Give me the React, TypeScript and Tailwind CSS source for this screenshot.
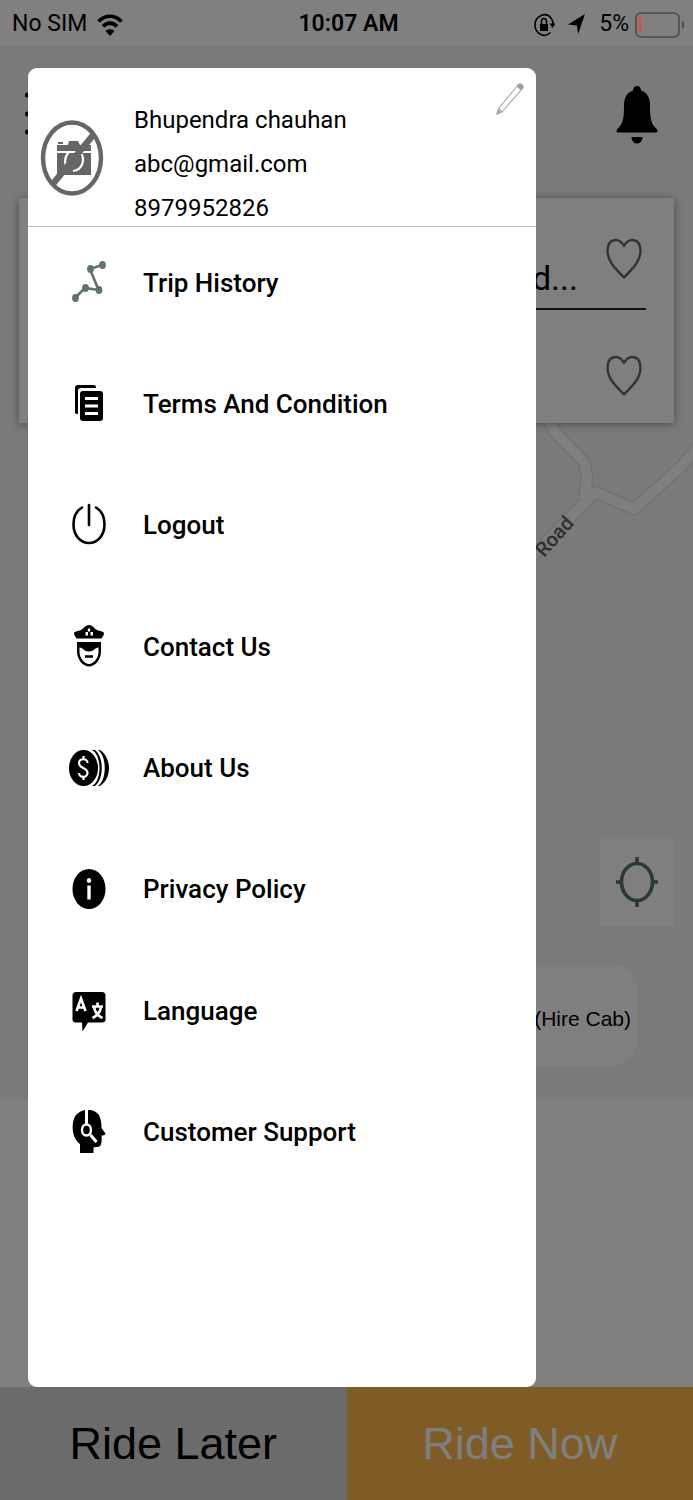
import type { ReactNode } from "react";

type MenuItem = {
  label: string;
  icon: ReactNode;
};

const TripIcon = () => (
  <svg viewBox="0 0 42 44" className="w-[42px] h-11" fill="#5f7173">
    <path d="M7 38 17 28 30.500 30 22 9 34 5" fill="none" stroke="#5f7173" strokeWidth="2.6" />
    <ellipse cx="7.500" cy="38" rx="3.400" ry="4" />
    <ellipse cx="17.500" cy="28" rx="3.400" ry="4" />
    <ellipse cx="31" cy="30" rx="3.400" ry="4" />
    <ellipse cx="22.500" cy="9" rx="3.400" ry="4" />
    <ellipse cx="34.500" cy="5" rx="3.400" ry="4" />
  </svg>
);

const TermsIcon = () => (
  <svg viewBox="0 0 42 44" className="w-[42px] h-11">
    <path d="M7 33V7q0-3 3-3h16q2 0 2 3H13q-3 0-3 3v23q-3 0-3-1z" />
    <rect x="12" y="10" width="23" height="30" rx="3" />
    <path d="M17 17.500h13M17 25h13M17 32.500h13" stroke="#fff" strokeWidth="3" />
  </svg>
);

const LogoutIcon = () => (
  <svg viewBox="0 0 42 44" className="w-[42px] h-11" fill="none" stroke="#000" strokeWidth="2.6" strokeLinecap="round">
    <path d="M14 4.500C8 8 5.500 15 5.500 21.500c0 11 7 18.500 15.500 18.500S36.500 32.500 36.500 21.500C36.500 15 34 8 28 4.500" />
    <path d="M21 2v20" />
  </svg>
);

const ContactIcon = () => (
  <svg viewBox="0 0 42 44" className="w-[42px] h-11">
    <path d="M21 1c3 0 5 3 8 5 3 1.500 7 1 7 3.500 0 2-1.500 3-2.500 5H8.500C7.500 12.500 6 11.500 6 9.500 6 7 10 7.500 13 6c3-2 5-5 8-5z" />
    <path d="M19.800 4.500h2.400v3h-2.400zM17.500 8h2.500v3.500h-2.500zM22.500 8H25v3.500h-2.500z" fill="#fff" />
    <path d="M9 18h24v9c0 9-6 15.500-12 15.500S9 36 9 27z" />
    <path d="M11.500 23.500c4 0 4 4 9.500 4s5.500-4 9.500-4V28c0 6-5 12-9.500 12S11.500 34 11.500 28z" fill="#fff" />
    <path d="M17 32.500h8" stroke="#000" strokeWidth="2.500" />
  </svg>
);

const AboutIcon = () => (
  <svg viewBox="0 0 42 44" className="w-[42px] h-11">
    <ellipse cx="15.500" cy="22" rx="14.500" ry="18" />
    <path d="M24 4c10 5 10 31 0 36h3c9-7 9-29 0-36zM30 4c9 6 9 30 0 36h2c12-8 12-28 0-36z" />
    <path d="M19.500 17c0-5-8.500-5-8.500 0 0 6 8.500 4 8.500 10 0 5-8.500 5-8.500 0M15.500 10v3M15.500 31v3" fill="none" stroke="#fff" strokeWidth="2.200" />
  </svg>
);

const PrivacyIcon = () => (
  <svg viewBox="0 0 42 44" className="w-[42px] h-11">
    <ellipse cx="21" cy="22" rx="16.500" ry="20" />
    <ellipse cx="21" cy="13.500" rx="2.200" ry="2.600" fill="#fff" />
    <path d="M21 18.500v14" stroke="#fff" strokeWidth="3.400" />
  </svg>
);

const LanguageIcon = () => (
  <svg viewBox="0 0 42 44" className="w-[42px] h-11">
    <path d="M8 4h26q3.500 0 3.500 3.500v24q0 3-3.500 3H20L14.500 43.500l-.5-9H8q-3.500 0-3.500-3v-24Q4.500 4 8 4z" />
    <path d="M8.500 23 13 10.500 17.500 23M10 19.500h6" fill="none" stroke="#fff" strokeWidth="2.600" />
    <path d="M24 18.500h11M29.500 14.500v4M33 19c-1 6-4 9-8.500 11M26 19c1 6 4 9 8.500 11" fill="none" stroke="#fff" strokeWidth="2.600" />
  </svg>
);

const SupportIcon = () => (
  <svg viewBox="0 0 42 44" className="w-[42px] h-11">
    <path d="M12 43V34C3 28 3 11 8 5c6-7 18-7 23 0 2 4 2.500 9 2.500 13l4 5.500c0 1.500-2 2-4 2 .5 4 0 8-1 10-1.500 2-4 1-7 2V43z" />
    <path d="M18.500 0v14M22.500 25l6 7" fill="none" stroke="#fff" strokeWidth="3" />
    <ellipse cx="18.500" cy="20" rx="4.500" ry="5.500" fill="#000" stroke="#fff" strokeWidth="2.400" />
  </svg>
);

const menuItems: MenuItem[] = [
  { label: "Trip History", icon: <TripIcon /> },
  { label: "Terms And Condition", icon: <TermsIcon /> },
  { label: "Logout", icon: <LogoutIcon /> },
  { label: "Contact Us", icon: <ContactIcon /> },
  { label: "About Us", icon: <AboutIcon /> },
  { label: "Privacy Policy", icon: <PrivacyIcon /> },
  { label: "Language", icon: <LanguageIcon /> },
  { label: "Customer Support", icon: <SupportIcon /> },
];

const StatusBar = () => (
  <div className="relative z-10 grid grid-cols-[1fr_auto_1fr] items-center h-[45px] pt-1 pl-3 pr-2 bg-[#808080] text-[23px]">
    <div className="flex items-center gap-2.5">
      <span>No SIM</span>
      <svg viewBox="0 0 26 22" className="w-[26px] h-[22px]" fill="none" stroke="#000" strokeWidth="3.600">
        <path d="M1.500 7.500C8 0.500 18 0.500 24.500 7.500" />
        <path d="M6 12.500c4-4.500 10-4.500 14 0" />
        <path d="M13 22 8.500 17c2.500-2.500 6.500-2.500 9 0z" fill="#000" stroke="none" />
      </svg>
    </div>
    <span className="font-semibold">10:07 AM</span>
    <div className="flex items-center justify-end gap-2">
      <svg viewBox="0 0 22 24" className="w-[22px] h-6 mr-1" fill="none" stroke="#000" strokeWidth="1.600">
        <path d="M16.500 19.500C10 26 1 20 1 12 1 3 12-2 17 5c1.500 2 2 4 2 6" />
        <path d="M15.500 10.500h6l-3 4.500z" fill="#000" stroke="none" />
        <path d="M7.500 11V8.500c0-4 5-4 5 0V11" />
        <path d="M6 11h8v7H6z" fill="#000" stroke="none" />
      </svg>
      <svg viewBox="0 0 17 21" className="w-[17px] h-[21px] mr-1.5">
        <path d="M17 0 10 20.500 9 11.500 0 10.500z" />
      </svg>
      <span>5%</span>
      <svg viewBox="0 0 50 26" className="w-[50px] h-[26px] -ml-0.5" fill="none">
        <rect x="1" y="1" width="43" height="24" rx="5" stroke="#4b4b4b" strokeWidth="1.600" />
        <path d="M5 5v16" stroke="#ff3b30" strokeWidth="2" />
        <path d="M47 9c3 1 3 7 0 8z" fill="#4b4b4b" />
      </svg>
    </div>
  </div>
);

const Heart = () => (
  <svg viewBox="0 0 36 41" className="w-9 h-[41px]" fill="none" stroke="#666" strokeWidth="2.400" strokeLinejoin="round">
    <path d="M18 8C13-1 1.500 0 1.500 13 1.500 24 11 32 18 39.500 25 32 34.500 24 34.500 13 34.500 0 23-1 18 8z" />
  </svg>
);

const Roads = () => (
  <svg viewBox="0 0 160 220" className="absolute right-0 top-[355px] w-[160px] h-[220px]" fill="none" strokeLinejoin="round">
    <g stroke="#e2e2e8" strokeWidth="13">
      <path d="M16 20 22 32 51 62 54 75 52 97" />
      <path d="M-10 166 62 92 101 109 149 66 165 46" />
    </g>
    <g stroke="#ffffff" strokeWidth="10">
      <path d="M16 20 22 32 51 62 54 75 52 99" />
      <path d="M-10 166 62 92 101 109 149 66 165 46" />
    </g>
    <text
      x="11"
      y="158"
      transform="rotate(-48 11 158)"
      fill="#5c6064"
      stroke="#f4f4f1"
      strokeWidth="3"
      paintOrder="stroke"
      className="font-['Roboto',sans-serif] text-[20px] font-medium"
    >
      Road
    </text>
  </svg>
);

const MapScreen = () => (
  <main className="relative flex flex-col flex-1 px-[19px] pb-[33px] bg-[#f4f4f1]">
    <Roads />
    <div className="flex justify-between items-start pl-1.5 pr-4 pt-10 h-[153px]">
      <button aria-label="Open menu" className="pt-1.5">
        <svg viewBox="0 0 40 44" className="w-10 h-11">
          <path d="M9 5h30M9 23h30M9 41h30" stroke="#000" strokeWidth="4" />
          <circle cx="2.500" cy="4" r="2.500" />
          <circle cx="2.500" cy="23" r="2.500" />
          <circle cx="2.500" cy="41" r="2.500" />
        </svg>
      </button>
      <button aria-label="Notifications">
        <svg viewBox="0 0 42 60" className="w-[42px] h-[60px]">
          <path d="M21 1c2.500 0 4 2 4 4.500 6 2 9 7 9 15 0 14 1 18 7 24 1 2 .5 3-1 3H2c-1.500 0-2-1-1-3 6-6 7-10 7-24 0-8 3-13 9-15C17 3 18.500 1 21 1z" />
          <path d="M15.500 52h11c0 4-2.500 6.500-5.500 6.500s-5.500-2.500-5.500-6.500z" />
        </svg>
      </button>
    </div>
    <section className="relative bg-white px-7 shadow-[0_1px_8px_rgba(0,0,0,0.4)]">
      <div className="flex items-start justify-end gap-7 h-28 pt-10 pr-1 border-b-2 border-[#222]">
        <span className="pt-5 text-[34px] leading-10">d...</span>
        <button aria-label="Save pickup">
          <Heart />
        </button>
      </div>
      <div className="flex items-start justify-end h-[113px] pt-[45px] pr-1">
        <button aria-label="Save destination">
          <Heart />
        </button>
      </div>
    </section>
    <div className="flex flex-col items-end mt-auto gap-[39px]">
      <button aria-label="Current location" className="flex items-center justify-center w-[74px] h-[89px] bg-white">
        <svg viewBox="0 0 42 50" className="w-[42px] h-[50px]" fill="none" stroke="#567070" strokeWidth="3.600">
          <ellipse cx="21" cy="25" rx="15.500" ry="18.500" />
          <path d="M21 0v6M21 44v6M0 25h6M36 25h6" />
        </svg>
      </button>
      <button className="h-[101px] mr-[37px] pl-10 pr-1.5 pt-1.5 rounded-r-3xl bg-white font-['Liberation_Sans',sans-serif] text-[21px]">
        (Hire Cab)
      </button>
    </div>
  </main>
);

const Drawer = () => (
  <aside className="absolute z-10 left-7 right-[157px] top-[68px] bottom-[113px] flex flex-col rounded-[9px] bg-white">
    <div className="flex items-start h-[159px] px-3 border-b border-[#bdbdbd]">
      <svg viewBox="0 0 64 78" className="w-16 h-[78px] mt-[51px] shrink-0" fill="#666">
        <path d="M17 26h11l1-4h9l2 4h11v30H17zM18 23h5v2h-5z" />
        <path d="M17 33h34" stroke="#fff" strokeWidth="1.800" />
        <path d="M29 33c-5 5-5 12-1 17M41 34c4 6 2 17-8 18" fill="none" stroke="#fff" strokeWidth="2.200" />
        <path d="M12 66 54 15" stroke="#666" strokeWidth="6.500" />
        <ellipse cx="32" cy="39" rx="29" ry="35.500" fill="none" stroke="#666" strokeWidth="4.400" />
      </svg>
      <div className="pl-[30px] pt-[30px] text-2xl leading-[44px]">
        <p>Bhupendra chauhan</p>
        <p>abc@gmail.com</p>
        <p>8979952826</p>
      </div>
      <button aria-label="Edit profile" className="ml-auto mt-3.5">
        <svg viewBox="0 0 28 34" className="w-7 h-[34px]" fill="none" stroke="#aaa" strokeWidth="1.100">
          <path d="M1 32 3 26 22 3q2-2 4 0t0 4L6 30zM3 26l3 4" />
          <path d="M22 3q2-2 4 0t0 4l-1 1-4-4zM1 32l1-4 3 2z" fill="#999" />
        </svg>
      </button>
    </div>
    <nav>
      <ul className="grid grid-rows-8 h-[971px]">
        {menuItems.map((item) => (
          <li key={item.label} className="flex items-start pt-[33px]">
            <a href="#" className="flex items-center gap-[33px] pl-10 text-[26px] font-medium">
              {item.icon}
              <span className="pt-0.5">{item.label}</span>
            </a>
          </li>
        ))}
      </ul>
    </nav>
  </aside>
);

export default function App() {
  return (
    <div className="relative flex flex-col min-h-screen overflow-hidden bg-white text-black font-['Roboto',sans-serif]">
      <StatusBar />
      <MapScreen />
      <div className="h-72 bg-white" />
      <footer className="grid grid-cols-2 h-[113px] font-['Liberation_Sans',sans-serif] text-[45px]">
        <button className="bg-[#d6d6d6]">Ride Later</button>
        <button className="bg-[#feb64c] text-white">Ride Now</button>
      </footer>
      <div className="absolute inset-0 bg-black/50" />
      <Drawer />
    </div>
  );
}
